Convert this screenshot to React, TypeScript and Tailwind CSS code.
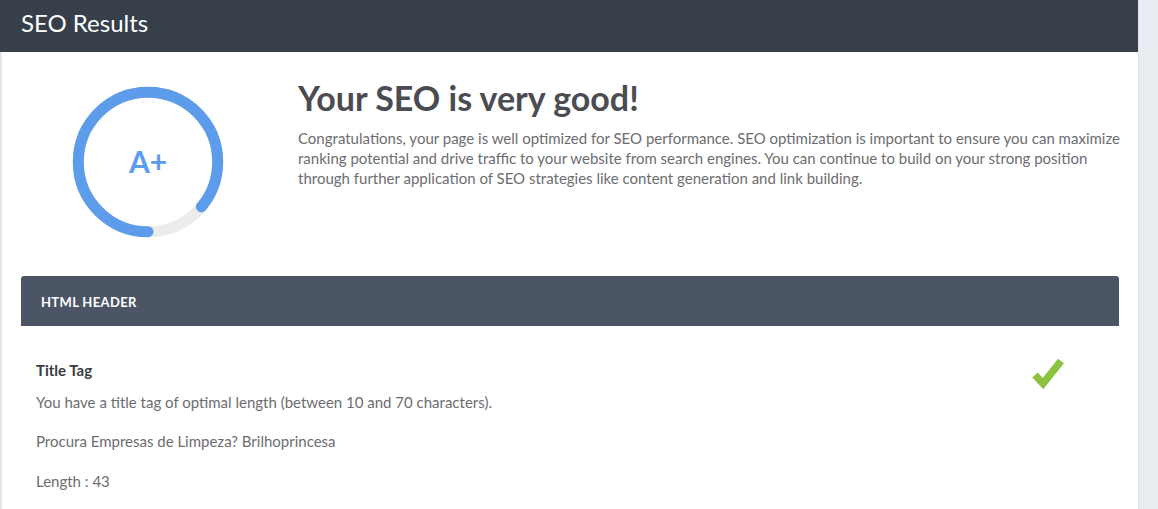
import React from "react";

const font = { fontFamily: "Lato, 'Open Sans', sans-serif" };

function Gauge() {
  const r = 69.7;
  const c = 2 * Math.PI * r;
  const pct = 0.86;
  return (
    <svg width="160" height="160" viewBox="0 0 160 160">
      <circle cx="80" cy="80" r={r} fill="none" stroke="#ececec" strokeWidth="11" />
      <circle
        cx="80"
        cy="80"
        r={r}
        fill="none"
        stroke="#5d9beb"
        strokeWidth="11"
        strokeLinecap="round"
        strokeDasharray={`${c * pct} ${c}`}
        transform="rotate(90 80 80)"
      />
      <text
        x="80"
        y="91"
        textAnchor="middle"
        fontSize="30"
        fontWeight="700"
        fill="#5d9beb"
        fontFamily="Lato, 'Open Sans', sans-serif"
      >
        A+
      </text>
    </svg>
  );
}

export default function App() {
  return (
    <div className="w-[1158px] h-[509px] overflow-hidden bg-[#e9edf1] flex" style={font}>
      <div className="w-[1139px] flex flex-col border-r border-[#dde2e7]">
        <div className="h-[52px] bg-[#363f4a] flex items-center px-[21px] pb-[6px]">
          <span className="text-white text-[24px] leading-none">SEO Results</span>
        </div>
        <div className="flex-1 bg-white border-l-2 border-[#e3e7eb]">
          <div className="h-[224px] flex">
            <div className="w-[296px] shrink-0 pl-[66px] pt-[30px]">
              <Gauge />
            </div>
            <div className="pt-[26px] pr-[10px]">
              <h1 className="text-[34px] font-bold leading-[40px] text-[#4b4c51]">Your SEO is very good!</h1>
              <p className="mt-[10px] text-[15px] leading-[20px] text-[#6d6d70]">
                Congratulations, your page is well optimized for SEO performance. SEO optimization is important to ensure you can maximize ranking potential and drive traffic to your website from search engines. You can continue to build on your strong position through further application of SEO strategies like content generation and link building.
              </p>
            </div>
          </div>
          <div className="ml-[19px] mr-[19px]">
            <div className="h-[50px] rounded-t-[3px] bg-[#4c5566] flex items-center px-[20px] pt-[3px]">
              <span className="text-white text-[13px] font-bold tracking-[0.35px]">HTML HEADER</span>
            </div>
            <div className="flex px-[15px] pt-[34px]">
              <div className="flex-1 text-[15px]">
                <div className="font-bold text-[#3b3c40] leading-[20px]">Title Tag</div>
                <p className="mt-[12px] text-[#6d6d70] leading-[20px]">You have a title tag of optimal length (between 10 and 70 characters).</p>
                <p className="mt-[19px] text-[#6d6d70] leading-[20px]">Procura Empresas de Limpeza? Brilhoprincesa</p>
                <p className="mt-[20px] text-[#6d6d70] leading-[20px]">Length : 43</p>
              </div>
              <div className="w-[36px] mr-[38px] -mt-[4px]">
                <svg width="36" height="34" viewBox="0 0 36 34">
                  <polyline points="5,19 13,27.5 31,5" fill="none" stroke="#8cc23f" strokeWidth="7.5" />
                </svg>
              </div>
            </div>
          </div>
        </div>
      </div>
    </div>
  );
}
